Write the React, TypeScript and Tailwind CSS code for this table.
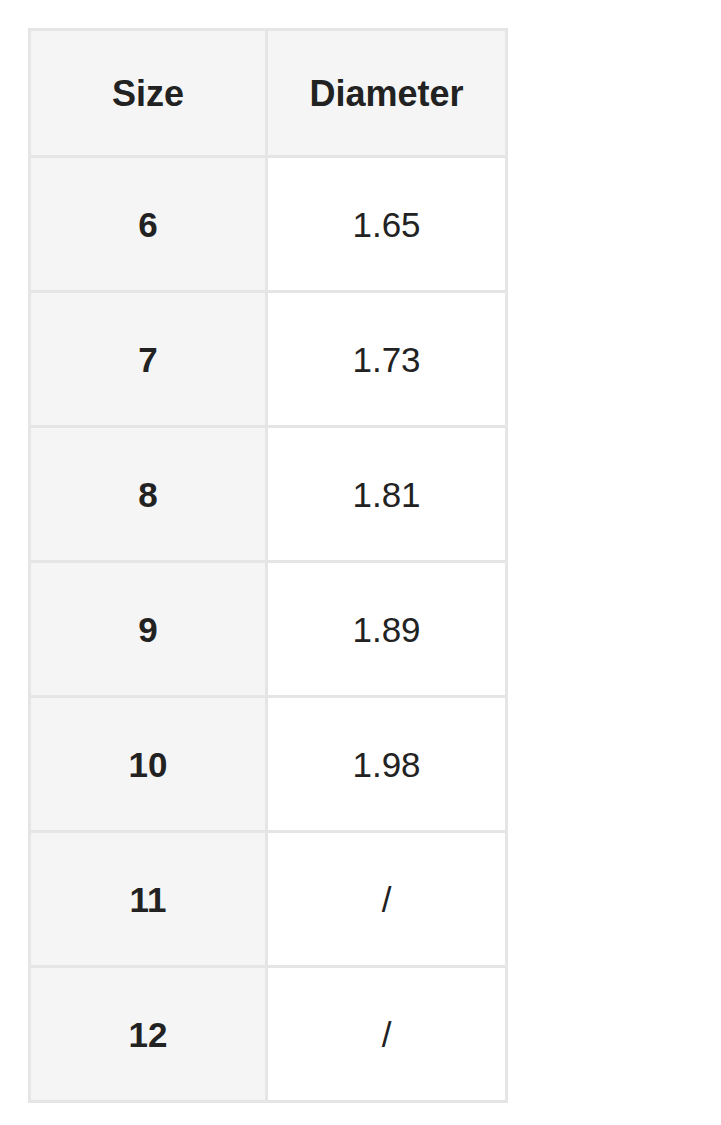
const rows: [string, string][] = [
  ['6', '1.65'],
  ['7', '1.73'],
  ['8', '1.81'],
  ['9', '1.89'],
  ['10', '1.98'],
  ['11', '/'],
  ['12', '/'],
]

export default function App() {
  return (
    <div className="min-h-screen bg-white p-[28px] font-['Liberation_Sans',Arial,sans-serif] text-[#222]">
      <div className="grid w-[480px] grid-cols-[234px_237px] gap-[3px] border-[3px] border-[#e5e5e5] bg-[#e5e5e5]">
        {/* header */}
        <div className="flex h-[124px] items-center justify-center bg-[#f5f5f5] pt-[1px] text-[36px] font-bold">Size</div>
        <div className="flex h-[124px] items-center justify-center bg-[#f5f5f5] pt-[1px] text-[36px] font-bold">Diameter</div>

        {rows.map(([size, dia]) => (
          <div key={size} className="contents">
            <div className="flex h-[132px] items-center justify-center bg-[#f5f5f5] pt-[2px] text-[35px] font-bold">{size}</div>
            <div className="flex h-[132px] items-center justify-center bg-white pt-[2px] text-[35px]">{dia}</div>
          </div>
        ))}
      </div>
    </div>
  )
}
